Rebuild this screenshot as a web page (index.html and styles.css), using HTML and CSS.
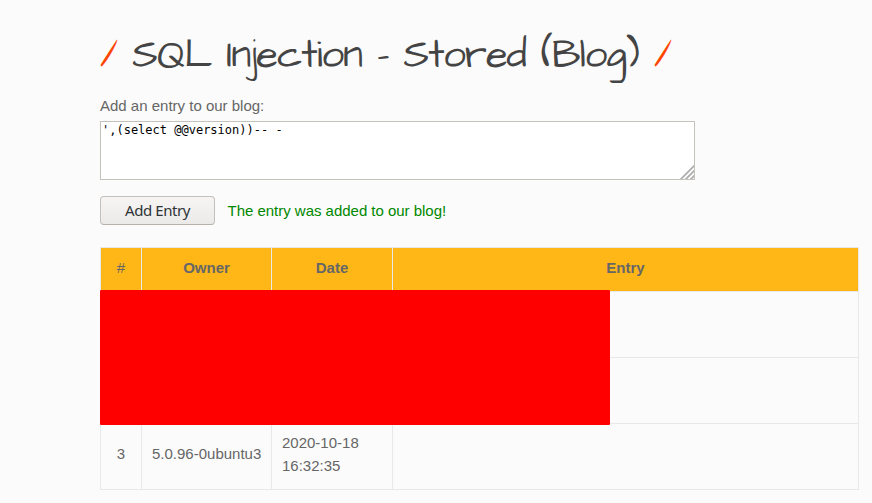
FILE: index.html
```html
<!DOCTYPE html>
<html lang="en">
<head>
<meta charset="utf-8">
<title>SQL Injection - Stored (Blog)</title>
<link rel="stylesheet" href="styles.css">
</head>
<body>
<main class="page">
  <h1 class="title"><span class="slash">/</span> SQL Injection - Stored (Blog) <span class="slash">/</span></h1>
  <form class="entry-form">
    <label class="label" for="entry">Add an entry to our blog:</label>
    <div class="field">
      <textarea id="entry" class="entry" spellcheck="false">',(select @@version))-- -</textarea>
      <svg class="grip" width="14" height="14" viewBox="0 0 14 14"><path d="M0.5 14.5 14.5 0.5M5.5 14.5 14.5 5.5M10.5 14.5 14.5 10.5"/></svg>
    </div>
    <div class="actions">
      <button class="button" type="button">Add Entry</button>
      <span class="success">The entry was added to our blog!</span>
    </div>
  </form>
  <div class="table-wrap">
    <table class="entries">
      <colgroup><col class="c-id"><col class="c-owner"><col class="c-date"><col class="c-entry"></colgroup>
      <thead>
        <tr><th class="plain">#</th><th>Owner</th><th>Date</th><th>Entry</th></tr>
      </thead>
      <tbody>
        <tr><td></td><td></td><td></td><td></td></tr>
        <tr><td></td><td></td><td></td><td></td></tr>
        <tr><td class="center">3</td><td>5.0.96-0ubuntu3</td><td>2020-10-18<br>16:32:35</td><td></td></tr>
      </tbody>
    </table>
    <div class="redaction"></div>
  </div>
</main>
</body>
</html>
```

FILE: styles.css
```css
* { box-sizing: border-box; }
body {
  margin: 0;
  height: 503px;
  overflow: hidden;
  background: #fbfbfb;
  color: #666;
  font: 15px/23px "Liberation Sans", Arial, sans-serif;
}
.page { width: 759px; margin-left: 100px; padding-top: 31px; }
.title {
  height: 63px;
  margin: 0;
  color: #444;
  font: 400 40px/50px "Architects Daughter", cursive;
  letter-spacing: -1px;
  white-space: nowrap;
}
.slash { color: #ff4500; }
.label { display: block; height: 27px; }
.field { position: relative; width: 595px; height: 59px; }
.entry {
  display: block;
  width: 595px;
  height: 59px;
  margin: 0;
  padding: 1px;
  border: 1px solid #c5c2bc;
  background: #fff;
  color: #000;
  font: 12px/15px "DejaVu Sans Mono", monospace;
  resize: none;
  outline: none;
  overflow: hidden;
}
.grip { position: absolute; right: 1px; bottom: 1px; fill: none; stroke: #b0b0b0; stroke-width: 1.9; }
.actions { display: flex; align-items: center; gap: 12.5px; margin-top: 16px; height: 29px; }
.button {
  width: 115px;
  height: 29px;
  padding: 0;
  border: 1px solid #c3bfba;
  border-bottom-color: #b5b0aa;
  border-radius: 4px;
  background: linear-gradient(#f6f5f4, #eceae8);
  color: #2e3436;
  font: 15px/25px "Noto Sans", sans-serif;
  letter-spacing: -0.45px;
}
.success { color: #008800; letter-spacing: -0.02px; }
.table-wrap { position: relative; margin-top: 22px; }
.entries { width: 759px; table-layout: fixed; border-collapse: collapse; }
.c-id { width: 41px; }
.c-owner { width: 130px; }
.c-date { width: 121px; }
.entries th, .entries td { border: 1px solid #e8e8e8; }
.entries th { height: 44px; padding: 0 0 4px; background: #ffb717; text-align: center; }
.entries th.plain { font-weight: normal; }
.entries td { height: 66px; padding: 0 0 6px 10px; white-space: nowrap; }
.entries td.center { padding-left: 0; text-align: center; }
.redaction { position: absolute; left: 0; top: 43px; width: 510px; height: 135px; border-radius: 1px; background: #f00; }
```
